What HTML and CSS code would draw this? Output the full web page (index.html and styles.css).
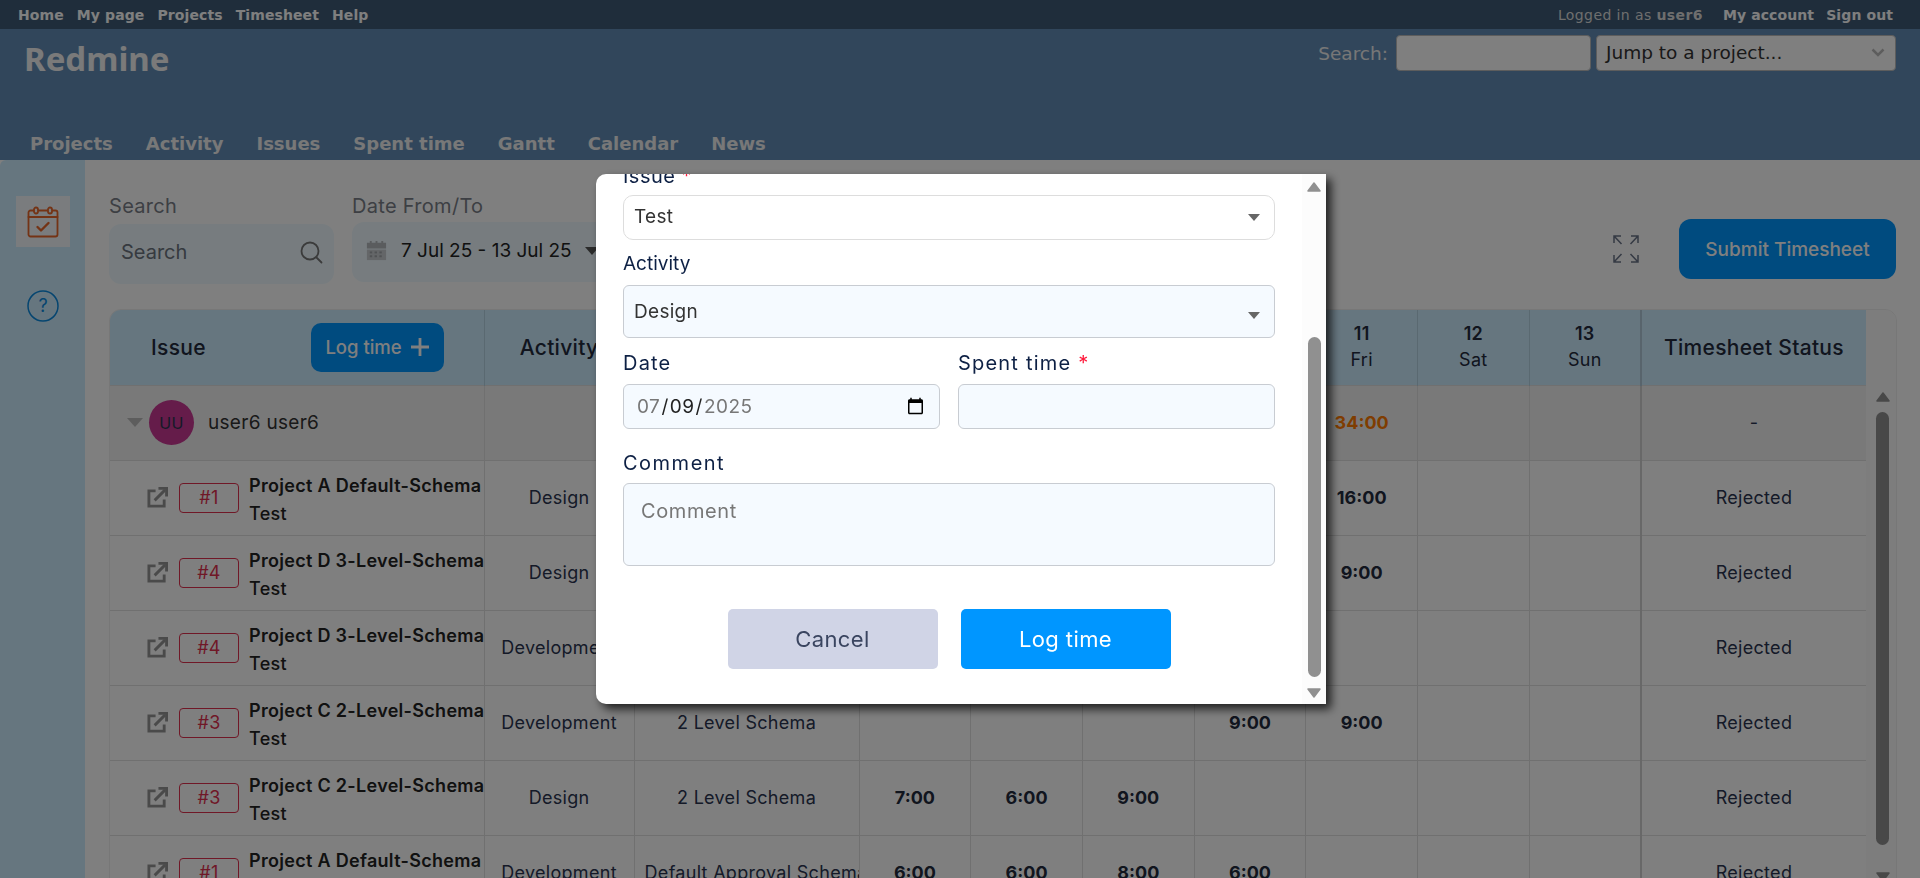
FILE: index.html
```html
<!DOCTYPE html>
<html lang="en">
<head>
<meta charset="utf-8">
<title>Redmine</title>
<link rel="stylesheet" href="styles.css">
</head>
<body>
<div class="top-menu">
  <nav class="top-left"><a>Home</a><a>My page</a><a>Projects</a><a>Timesheet</a><a>Help</a></nav>
  <div class="top-right"><span class="logged">Logged in as <b>user6</b></span><a>My account</a><a>Sign out</a></div>
</div>
<header class="header">
  <div class="header-top">
    <h1 class="brand">Redmine</h1>
    <div class="quick">
      <label class="quick-label">Search:</label>
      <input class="quick-input" type="text">
      <div class="jump"><span>Jump to a project...</span>
        <svg class="jump-chev" viewBox="0 0 14 9" width="14" height="9"><path d="M1.500 1.500 7 7l5.500-5.500" fill="none" stroke="#bbb" stroke-width="2.500"/></svg>
      </div>
    </div>
  </div>
  <nav class="main-menu"><a>Projects</a><a>Activity</a><a>Issues</a><a>Spent time</a><a>Gantt</a><a>Calendar</a><a>News</a></nav>
</header>
<div class="main">
  <aside class="side">
    <div class="side-active">
      <svg viewBox="0 0 32 32" width="32" height="32" fill="none" stroke="#e8662a" stroke-width="1.800" stroke-linejoin="round" stroke-linecap="round"><rect x="1.500" y="4.500" width="29" height="26" rx="2"/><path d="M1.500 11h29"/><rect x="7" y="1.500" width="4" height="6" rx="2" fill="#f4f9fc"/><rect x="21" y="1.500" width="4" height="6" rx="2" fill="#f4f9fc"/><path d="M10.500 21l3.500 3.500 7.500-7.500" stroke-width="2.400"/></svg>
    </div>
    <svg class="side-help" viewBox="0 0 32 32" width="32" height="32"><circle cx="16" cy="16" r="15" fill="none" stroke="#0a8be0" stroke-width="1.500"/><text x="16" y="22" text-anchor="middle" class="help-q">?</text></svg>
  </aside>
  <section class="content">
    <div class="filters">
      <div class="f-search">
        <label class="f-label">Search</label>
        <div class="f-box"><span class="f-ph">Search</span>
          <svg viewBox="0 0 24 24" width="24" height="24" fill="none" stroke="#777" stroke-width="1.800" stroke-linecap="round"><circle cx="11" cy="11" r="8.500"/><path d="M17.500 17.500 22.500 22.500"/></svg>
        </div>
      </div>
      <div class="f-date">
        <label class="f-label">Date From/To</label>
        <div class="f-box f-box-date">
          <svg viewBox="0 0 24 24" width="23" height="25" fill="#b4b8bc"><path d="M2 4h3V2h2v2h4V2h2v2h4V2h2v2h3v6H2z"/><path d="M2 11h20v11H2z" fill="#c8ccd0"/><g fill="#a0a4a8"><rect x="5" y="13" width="2.500" height="2"/><rect x="10" y="13" width="2.500" height="2"/><rect x="15" y="13" width="2.500" height="2"/><rect x="5" y="17" width="2.500" height="2"/><rect x="10" y="17" width="2.500" height="2"/><rect x="15" y="17" width="2.500" height="2"/></g></svg>
          <span class="f-val">7 Jul 25 - 13 Jul 25</span><i class="tri-down"></i>
        </div>
      </div>
      <div class="spacer"></div>
      <svg class="expand" viewBox="0 0 26 28" width="26" height="28" fill="none" stroke="#6a7488" stroke-width="1.500"><path d="M1 8V1h7M1 1l7.500 8M25 8V1h-7M25 1l-7.500 8M1 20v7h7M1 27l7.500-8M25 20v7h-7M25 27l-7.500-8"/></svg>
      <button class="submit">Submit Timesheet</button>
    </div>
    <div class="table-wrap">
      <div class="table-clip">
        <table class="sheet">
          <colgroup><col class="c-issue"><col class="c-act"><col class="c-sch"><col class="c-day"><col class="c-day"><col class="c-day"><col class="c-day"><col class="c-day"><col class="c-day"><col class="c-day"><col class="c-status"></colgroup>
          <thead>
            <tr>
              <th class="th-issue"><div class="th-issue-in"><span>Issue</span><button class="log-btn">Log time <svg viewBox="0 0 18 18" width="18" height="18"><path d="M9 0v18M0 9h18" stroke="#fff" stroke-width="2.800"/></svg></button></div></th>
              <th>Activity</th>
              <th>Approval Schema</th>
              <th class="day"><b>7</b><span>Mon</span></th>
              <th class="day"><b>8</b><span>Tue</span></th>
              <th class="day"><b>9</b><span>Wed</span></th>
              <th class="day"><b>10</b><span>Thu</span></th>
              <th class="day"><b>11</b><span>Fri</span></th>
              <th class="day"><b>12</b><span>Sat</span></th>
              <th class="day"><b>13</b><span>Sun</span></th>
              <th class="th-status">Timesheet Status</th>
            </tr>
          </thead>
          <tbody>
            <tr class="group">
              <td class="user-cell"><div class="user"><i class="tri-down tri-user"></i><span class="avatar">UU</span><span class="uname">user6 user6</span></div></td>
              <td></td><td></td><td class="t">13:00</td><td class="t">12:00</td><td class="t">17:00</td><td class="t">15:00</td><td class="t total">34:00</td><td></td><td></td><td class="st">-</td>
            </tr>
            <tr><td><div class="issue"><svg class="ext" viewBox="0 0 22 22" width="21" height="21" fill="none" stroke="#959595" stroke-width="3"><path d="M9 4H2v16h16v-7"/><path d="M8 14 19 3"/><path d="M12 1.500h8.500V10"/></svg><span class="badge">#1</span><div class="i-text"><b>Project A Default-Schema</b><span>Test</span></div></div></td><td class="cell">Design</td><td class="cell">Default Approval Schema</td><td></td><td></td><td></td><td></td><td class="t">16:00</td><td></td><td></td><td class="st">Rejected</td></tr>
            <tr><td><div class="issue"><svg class="ext" viewBox="0 0 22 22" width="21" height="21" fill="none" stroke="#959595" stroke-width="3"><path d="M9 4H2v16h16v-7"/><path d="M8 14 19 3"/><path d="M12 1.500h8.500V10"/></svg><span class="badge">#4</span><div class="i-text"><b>Project D 3-Level-Schema</b><span>Test</span></div></div></td><td class="cell">Design</td><td class="cell">3 Level Schema</td><td></td><td></td><td></td><td></td><td class="t">9:00</td><td></td><td></td><td class="st">Rejected</td></tr>
            <tr><td><div class="issue"><svg class="ext" viewBox="0 0 22 22" width="21" height="21" fill="none" stroke="#959595" stroke-width="3"><path d="M9 4H2v16h16v-7"/><path d="M8 14 19 3"/><path d="M12 1.500h8.500V10"/></svg><span class="badge">#4</span><div class="i-text"><b>Project D 3-Level-Schema</b><span>Test</span></div></div></td><td class="cell">Development</td><td class="cell">3 Level Schema</td><td></td><td></td><td></td><td></td><td></td><td></td><td></td><td class="st">Rejected</td></tr>
            <tr><td><div class="issue"><svg class="ext" viewBox="0 0 22 22" width="21" height="21" fill="none" stroke="#959595" stroke-width="3"><path d="M9 4H2v16h16v-7"/><path d="M8 14 19 3"/><path d="M12 1.500h8.500V10"/></svg><span class="badge">#3</span><div class="i-text"><b>Project C 2-Level-Schema</b><span>Test</span></div></div></td><td class="cell">Development</td><td class="cell">2 Level Schema</td><td></td><td></td><td></td><td class="t">9:00</td><td class="t">9:00</td><td></td><td></td><td class="st">Rejected</td></tr>
            <tr><td><div class="issue"><svg class="ext" viewBox="0 0 22 22" width="21" height="21" fill="none" stroke="#959595" stroke-width="3"><path d="M9 4H2v16h16v-7"/><path d="M8 14 19 3"/><path d="M12 1.500h8.500V10"/></svg><span class="badge">#3</span><div class="i-text"><b>Project C 2-Level-Schema</b><span>Test</span></div></div></td><td class="cell">Design</td><td class="cell">2 Level Schema</td><td class="t">7:00</td><td class="t">6:00</td><td class="t">9:00</td><td></td><td></td><td></td><td></td><td class="st">Rejected</td></tr>
            <tr><td><div class="issue"><svg class="ext" viewBox="0 0 22 22" width="21" height="21" fill="none" stroke="#959595" stroke-width="3"><path d="M9 4H2v16h16v-7"/><path d="M8 14 19 3"/><path d="M12 1.500h8.500V10"/></svg><span class="badge">#1</span><div class="i-text"><b>Project A Default-Schema</b><span>Test</span></div></div></td><td class="cell">Development</td><td class="cell">Default Approval Schema</td><td class="t">6:00</td><td class="t">6:00</td><td class="t">8:00</td><td class="t">6:00</td><td></td><td></td><td></td><td class="st">Rejected</td></tr>
          </tbody>
        </table>
      </div>
      <div class="t-scroll">
        <div class="t-scroll-head"></div>
        <div class="t-scroll-track">
          <svg class="arrow" viewBox="0 0 14 10" width="14" height="10"><path d="M7 1 13 9H1z" fill="#909090" stroke="#909090" stroke-width="1.500" stroke-linejoin="round"/></svg>
          <div class="t-thumb"></div>
          <svg class="arrow" viewBox="0 0 14 10" width="14" height="10"><path d="M7 9 13 1H1z" fill="#909090" stroke="#909090" stroke-width="1.500" stroke-linejoin="round"/></svg>
        </div>
      </div>
    </div>
  </section>
</div>
<div class="overlay"></div>
<div class="modal">
  <form class="m-form">
    <label class="m-label m-first">Issue <em>*</em></label>
    <div class="m-select m-white"><span>Test</span><i class="m-tri"></i></div>
    <label class="m-label m-activity">Activity</label>
    <div class="m-select m-tall"><span>Design</span><i class="m-tri m-tri-low"></i></div>
    <div class="m-two">
      <div class="m-col">
        <label class="m-label">Date</label>
        <input class="m-input m-date" type="date" value="2025-07-09">
      </div>
      <div class="m-col">
        <label class="m-label">Spent time <em>*</em></label>
        <input class="m-input" type="text">
      </div>
    </div>
    <label class="m-label m-comment">Comment</label>
    <textarea class="m-area" placeholder="Comment"></textarea>
    <div class="m-actions">
      <button type="button" class="btn-cancel">Cancel</button>
      <button type="button" class="btn-log">Log time</button>
    </div>
  </form>
  <div class="m-scroll">
    <svg class="m-arrow" viewBox="0 0 14 10" width="14" height="10"><path d="M7 1 13 9H1z" fill="#909090" stroke="#909090" stroke-width="1.500" stroke-linejoin="round"/></svg>
    <div class="m-thumb"></div>
    <svg class="m-arrow" viewBox="0 0 14 10" width="14" height="10"><path d="M7 9 13 1H1z" fill="#909090" stroke="#909090" stroke-width="1.500" stroke-linejoin="round"/></svg>
  </div>
</div>
</body>
</html>
```
FILE: styles.css
```css
* { box-sizing: border-box; }
html, body { margin: 0; height: 878px; overflow: hidden; }
body { font-family: Inter, "Open Sans", sans-serif; color: #2a3450; background: #fff; display: flex; flex-direction: column; }

.top-menu { height: 29px; flex: none; background: #3e5b76; display: flex; justify-content: space-between; align-items: center; padding: 0 27px 0 18px; font: 700 14px "DejaVu Sans", sans-serif; letter-spacing: .1px; color: #fff; }
.top-left { display: flex; gap: 13px; }
.top-right { display: flex; gap: 12px; }
.logged { font-weight: 400; margin-right: 8px; letter-spacing: .4px; color: #ddd; }

.header { height: 131px; flex: none; background: #628db6; display: flex; flex-direction: column; justify-content: space-between; color: #fff; }
.header-top { display: flex; justify-content: space-between; align-items: flex-start; padding: 6px 24px 0 24px; }
.brand { margin: 0; font: 700 33px/48px "Noto Sans", sans-serif; color: #f4f4f4; }
.quick { display: flex; align-items: center; gap: 8px; }
.quick-label { font: 400 18.500px "DejaVu Sans", sans-serif; color: #eee; }
.quick-input { width: 195px; height: 36px; background: #fff; border: 1px solid #bbb; border-radius: 4px; }
.jump { width: 300px; height: 36px; margin-left: -3px; background: #fff; border: 1px solid #bbb; border-radius: 4px; display: flex; align-items: center; justify-content: space-between; padding: 0 10px 2px 9px; font: 400 18.500px "DejaVu Sans", sans-serif; color: #333; white-space: nowrap; }
.main-menu { display: flex; gap: 33px; padding: 0 0 6px 30px; font: 700 18px "DejaVu Sans", sans-serif; color: #f0f0f0; }

.main { flex: 1; min-height: 0; display: flex; }
.side { width: 85px; flex: none; background: #cdecff; border-radius: 6px 0 0 0; display: flex; flex-direction: column; align-items: center; padding-top: 36px; }
.side-active { width: 54px; height: 51px; background: #f4f9fc; margin-left: 1px; display: flex; align-items: center; justify-content: center; }
.side-help { margin-top: 43px; }
.help-q { font: 400 18px Inter, sans-serif; fill: #0a8be0; }

.content { flex: 1; min-width: 0; padding: 0 23px 0 24px; background: #fff; }
.filters { display: flex; align-items: flex-start; height: 149px; padding-top: 34px; }
.f-search { width: 225px; margin-right: 18px; }
.f-date { width: 300px; }
.f-label { display: block; height: 24px; margin-bottom: 6px; font-size: 20px; letter-spacing: .3px; line-height: 24px; color: #7a7f88; white-space: nowrap; }
.f-box { height: 60px; background: #eef9ff; border-radius: 12px; display: flex; align-items: center; justify-content: space-between; padding: 0 11px 4px 12px; font-size: 20px; color: #6c7480; }
.f-box-date { margin-top: -2px; justify-content: flex-start; gap: 13px; padding: 0 0 3px 13px; font-size: 19px; color: #222; }
.f-val { white-space: nowrap; }
.tri-down { width: 0; height: 0; border: 7px solid transparent; border-top: 8px solid #555; border-bottom: 0; display: block; }
.spacer { flex: 1; }
.expand { margin: 41px 40px 0 0; }
.submit { width: 217px; height: 60px; margin: 25px 1px 0 0; border: 0; border-radius: 12px; background: #0096ff; color: #fff; font: 500 19px Inter, sans-serif; }

.table-wrap { display: flex; height: 600px; border: 1px solid #eee; border-radius: 12px 12px 0 0; overflow: hidden; }
.table-clip { width: 1756px; flex: none; overflow: hidden; }
.sheet { width: 1756px; table-layout: fixed; border-collapse: collapse; }
.c-issue { width: 374px; } .c-act { width: 150px; } .c-sch { width: 225px; } .c-day { width: 111.700px; } .c-status { width: 225px; }
.sheet thead tr { height: 75px; background: #cdecff; }
.sheet th { font-size: 21px; letter-spacing: .3px; font-weight: 500; border-right: 1px solid #b5d2e3; color: #222a3d; white-space: nowrap; overflow: hidden; }
.th-issue-in { display: flex; align-items: center; justify-content: space-between; padding: 0 39px 0 40px; }
.log-btn { width: 133px; height: 49px; border: 0; border-radius: 10px; background: #0096ff; color: #fff; font: 500 18.500px Inter, sans-serif; display: flex; align-items: center; justify-content: center; gap: 9px; padding: 0; }
.sheet th.day b { display: block; font-size: 18px; font-weight: 600; line-height: 26px; }
.sheet th.day span { display: block; font-size: 18px; font-weight: 400; line-height: 26px; }
.sheet th:nth-child(10) { border-right: 2px solid #b0c8d8; }
.sheet td:nth-child(10) { border-right: 2px solid #d0d0d0; }
.sheet th.th-status { border-right: 0; }
.sheet tbody tr { height: 75px; }
.sheet td { border: 1px solid #e0e0e0; padding: 0; text-align: center; font-size: 18px; letter-spacing: .3px; color: #2a3450; overflow: hidden; white-space: nowrap; }
.sheet td:first-child { border-left: 0; }
.sheet td:last-child { border-right: 0; }
.group { background: #f2f2f2; }
.user { display: flex; align-items: center; padding-left: 17px; }
.tri-user { border-top-color: #bbb; margin-right: 6px; border-width: 8px; border-top-width: 9px; border-bottom-width: 0; }
.avatar { width: 45px; height: 45px; border-radius: 50%; background: #ca3894; color: #2a3450; display: flex; align-items: center; justify-content: center; font-size: 16px; margin-right: 14px; }
.uname { font-size: 19px; color: #333; }
.issue { display: flex; align-items: center; padding-left: 37px; }
.ext { flex: none; margin-right: 11px; }
.badge { width: 60px; height: 30px; flex: none; border: 1px solid #e0304e; border-radius: 4px; color: #e0304e; font-size: 18px; line-height: 28px; text-align: center; margin-right: 10px; }
.i-text { text-align: left; display: flex; flex-direction: column; margin-top: 5px; font-size: 18px; line-height: 28px; min-width: 0; }
.i-text b { font-weight: 600; color: #222; }
.i-text span { color: #222; font-weight: 500; }
.sheet td.cell { padding: 0 10px; }
.sheet td.t { font-size: 18px; letter-spacing: 0; font-weight: 700; color: #222a3d; }
.sheet td.total { color: #ff7a00; }

.t-scroll { flex: 1; display: flex; flex-direction: column; background: #fafafa; }
.t-scroll-head { height: 75px; flex: none; }
.t-scroll-track { flex: 1; display: flex; flex-direction: column; align-items: center; padding: 7px 0 0 3px; }
.t-thumb { width: 13px; height: 433px; margin: 10px 0 27px; background: #909090; border-radius: 7px; }

.overlay { position: fixed; inset: 0; background: rgba(0,0,0,.5); }
.modal { position: fixed; left: 596px; top: 174px; width: 730px; height: 530px; background: #fff; border-radius: 10px 0 0 10px; box-shadow: 5px 5px 10px rgba(0,0,0,.75); display: flex; overflow: hidden; }
.m-form { width: 706px; flex: none; padding: 0 27px 0 27px; display: flex; flex-direction: column; color: #0d2044; }
.m-label { display: block; height: 30px; font-size: 20px; letter-spacing: 1.200px; line-height: 30px; color: #0d2044; white-space: nowrap; }
.m-label em { color: #ff1a3c; font-style: normal; }
.m-first { margin-top: -13px; margin-bottom: 4px; letter-spacing: .5px; }
.m-activity { margin-top: 9px; margin-bottom: 6px; font-size: 19px; letter-spacing: 0; }
.m-select { height: 53px; display: flex; align-items: center; justify-content: space-between; padding: 0 14px 0 10px; background: #f5faff; border: 1px solid #c8ccd2; border-radius: 6px; font-size: 19px; letter-spacing: .3px; color: #333; }
.m-white { height: 45px; background: #fff; border-color: #ddd; border-radius: 10px; padding-bottom: 2px; }
.m-white .m-tri { margin-top: 2px; }
.m-tri { width: 0; height: 0; border: 6px solid transparent; border-top: 7px solid #666; border-bottom: 0; display: block; }
.m-tri-low { margin-top: 8px; }
.m-two { display: flex; gap: 18px; margin-top: 10px; }
.m-col { flex: 1; min-width: 0; display: flex; flex-direction: column; }
.m-col .m-label { margin-bottom: 6px; }
.m-input { height: 45px; width: 100%; background: #f5faff; border: 1px solid #c8ccd2; border-radius: 6px; padding: 0 12px; font: 400 19px Inter, sans-serif; letter-spacing: .5px; color: #222; }
.m-date::-webkit-datetime-edit-month-field, .m-date::-webkit-datetime-edit-year-field { color: #777; }
.m-comment { margin-top: 19px; margin-bottom: 5px; letter-spacing: 1.500px; }
.m-area { height: 83px; resize: none; background: #f5faff; border: 1px solid #c8ccd2; border-radius: 6px; padding: 15px 17px; font: 400 20px Inter, sans-serif; letter-spacing: .6px; }
.m-area::placeholder { color: #777; }
.m-actions { display: flex; justify-content: center; gap: 23px; margin-top: 43px; }
.btn-cancel, .btn-log { width: 210px; height: 60px; border: 0; border-radius: 5px; font: 400 22px Inter, sans-serif; letter-spacing: .4px; }
.btn-cancel { background: #d0d4e6; color: #3a4560; }
.btn-log { background: #0096ff; color: #fff; }
.m-scroll { flex: 1; background: #fcfcfc; display: flex; flex-direction: column; align-items: center; padding-top: 8px; }
.m-thumb { width: 13px; height: 340px; margin-top: 145px; margin-bottom: 11px; background: #909090; border-radius: 7px; }
```
